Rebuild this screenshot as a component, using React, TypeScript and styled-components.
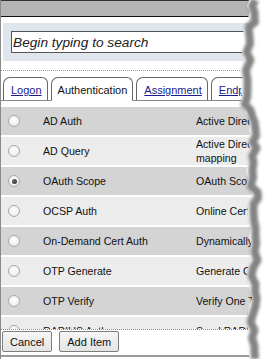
import React from "react";
import styled, { createGlobalStyle } from "styled-components";

const GlobalStyle = createGlobalStyle`
  html, body { margin: 0; padding: 0; background: #fff; }
  body { font-family: "Liberation Sans", Arial, sans-serif; overflow: hidden; }
  * { box-sizing: border-box; }
`;

const Page = styled.div`
  position: relative;
  width: 266px;
  height: 359px;
  overflow: hidden;
  background: #fff;
  border-left: 1px solid #8a8a8a;
  display: flex;
  flex-direction: column;
`;

const TitleBar = styled.div`
  flex: none;
  height: 17px;
  background: #b4b4b4;
  border-top: 1px solid #333;
  border-bottom: 1px solid #111;
`;

const SearchPanel = styled.div`
  flex: none;
  margin: 6px 0 0 2px;
  padding: 8px 0 8px 8px;
  background: #dfe6ed;
`;

const SearchInput = styled.input`
  display: block;
  width: 260px;
  height: 22px;
  border: 1px solid #555;
  padding: 0 0 0 1px;
  background: #fff;
  font-family: "Liberation Sans", Arial, sans-serif;
  font-style: italic;
  font-size: 13.7px;
  color: #222;
  outline: none;
  &::placeholder { color: #222; opacity: 1; }
`;

const DottedRule = styled.div`
  flex: none;
  margin-top: 9px;
  border-top: 1px dotted #9a9a9a;
`;

const TabStrip = styled.div`
  flex: none;
  margin-top: 6px;
  height: 24px;
  display: flex;
  align-items: flex-end;
  gap: 3px;
  padding-left: 2px;
  border-bottom: 1px solid #8a8a8a;
`;

const Tab = styled.div<{ $active?: boolean }>`
  flex: none;
  height: ${(p) => (p.$active ? "24px" : "23px")};
  margin-bottom: ${(p) => (p.$active ? "-1px" : "0")};
  display: flex;
  align-items: center;
  padding: 2px 5px 0 ${(p) => (p.$active ? "6px" : "7px")};
  border: 1px solid #666;
  border-bottom: ${(p) => (p.$active ? "1px solid #fff" : "none")};
  border-radius: 7px 6px 0 0;
  background: #fff;
  font-size: 11px;
  color: ${(p) => (p.$active ? "#111" : "#1c1c8e")};
  text-decoration: ${(p) => (p.$active ? "none" : "underline")};
  white-space: nowrap;
`;

const List = styled.div`
  flex: none;
  margin-top: 6px;
  height: 222px;
  overflow: hidden;
`;

const Row = styled.div<{ $dark: boolean }>`
  display: grid;
  grid-template-columns: 42px 153px 1fr;
  align-items: center;
  height: 30px;
  border-bottom: 2px solid #fff;
  background: ${(p) => (p.$dark ? "#d4d4d4" : "#ececec")};
  font-size: 10.6px;
  color: #111;
`;

const RadioCell = styled.div`
  padding-left: 7px;
  display: flex;
  align-items: center;
`;

const Radio = styled.span<{ $checked?: boolean }>`
  position: relative;
  display: block;
  width: 12px;
  height: 12px;
  border-radius: 50%;
  border: 1px solid #a9a9a9;
  background: radial-gradient(circle at 50% 40%, #ffffff 0%, #f2f2f2 55%, #dcdcdc 100%);
  &::after {
    content: "";
    display: ${(p) => (p.$checked ? "block" : "none")};
    position: absolute;
    left: 2.5px;
    top: 2.5px;
    width: 5px;
    height: 5px;
    border-radius: 50%;
    background: radial-gradient(circle at 40% 40%, #666 0%, #2a2a2a 100%);
  }
`;

const NameCell = styled.div`
  white-space: nowrap;
  overflow: hidden;
`;

const DescCell = styled.div`
  white-space: nowrap;
  overflow: hidden;
  line-height: 14px;
`;

const Footer = styled.div`
  flex: none;
  display: flex;
  gap: 7px;
  padding: 1px 0 3px 1px;
  border-top: 1px dotted #8a8a8a;
  border-bottom: 2px solid #9a9a9a;
`;

const Button = styled.button`
  height: 21px;
  padding: 0 7px;
  border: 1px solid #7d7d7d;
  border-radius: 2px;
  background: linear-gradient(#f6f6f6, #e4e4e4);
  font-family: "Liberation Sans", Arial, sans-serif;
  font-size: 11px;
  color: #111;
`;

const TornEdge = styled.svg`
  position: absolute;
  top: 0;
  right: 0;
  width: 30px;
  height: 359px;
  pointer-events: none;
`;

const edge: [number, number][] = [
  [249, 0], [247, 6], [250, 12], [248, 18], [250, 22], [244, 27], [243, 36], [245, 44],
  [242, 52], [244, 60], [241, 70], [243, 80], [241, 90], [242, 98], [240, 104], [244, 110],
  [247, 116], [250, 122], [249, 130], [251, 136], [248, 142], [250, 148], [247, 156],
  [249, 162], [246, 170], [248, 178], [246, 186], [251, 192], [253, 198], [249, 204],
  [247, 212], [249, 220], [251, 228], [249, 236], [251, 244], [250, 252], [251, 260],
  [248, 268], [247, 276], [249, 284], [250, 292], [252, 298], [249, 306], [248, 314],
  [246, 322], [248, 330], [247, 338], [250, 346], [248, 352], [250, 359],
];

const edgePts = edge.map(([x, y]) => `${x},${y}`).join(" ");
const shadowPts = edge
  .map(([x, y], i) => `${x + 4.5 + (i % 3 === 0 ? 2 : i % 3 === 1 ? 0.5 : 0)},${y}`)
  .join(" ");

const rows = [
  { name: "AD Auth", desc: ["Active Directory Authentication"] },
  { name: "AD Query", desc: ["Active Directory Query for attribute", "mapping"] },
  { name: "OAuth Scope", desc: ["OAuth Scope Validation"], checked: true },
  { name: "OCSP Auth", desc: ["Online Certificate Status Protocol"] },
  { name: "On-Demand Cert Auth", desc: ["Dynamically request certificate"] },
  { name: "OTP Generate", desc: ["Generate One Time Password"] },
  { name: "OTP Verify", desc: ["Verify One Time Password"] },
  { name: "RADIUS Auth", desc: ["Send RADIUS request"] },
];

export default function App() {
  return (
    <>
      <GlobalStyle />
      <Page>
        <TitleBar />
        <SearchPanel>
          <SearchInput readOnly placeholder="Begin typing to search" />
        </SearchPanel>
        <DottedRule />
        <TabStrip>
          <Tab>Logon</Tab>
          <Tab $active>Authentication</Tab>
          <Tab>Assignment</Tab>
          <Tab>Endpoint Security</Tab>
        </TabStrip>
        <List>
          {rows.map((r, i) => (
            <Row key={r.name} $dark={i % 2 === 0}>
              <RadioCell>
                <Radio $checked={r.checked} />
              </RadioCell>
              <NameCell>{r.name}</NameCell>
              <DescCell>
                {r.desc.map((d) => (
                  <div key={d}>{d}</div>
                ))}
              </DescCell>
            </Row>
          ))}
        </List>
        <Footer>
          <Button>Cancel</Button>
          <Button>Add Item</Button>
        </Footer>
        <TornEdge viewBox="236 0 30 359" preserveAspectRatio="none">
          <defs>
            <filter id="tearBlur" x="-50%" y="-5%" width="200%" height="110%">
              <feGaussianBlur stdDeviation="1.8" />
            </filter>
          </defs>
          <polygon points={`${edgePts} 266,359 266,0`} fill="#fff" />
          <polyline
            points={shadowPts}
            fill="none"
            stroke="#767676"
            strokeWidth="8"
            strokeLinejoin="round"
            filter="url(#tearBlur)"
            opacity="0.9"
          />
        </TornEdge>
      </Page>
    </>
  );
}
